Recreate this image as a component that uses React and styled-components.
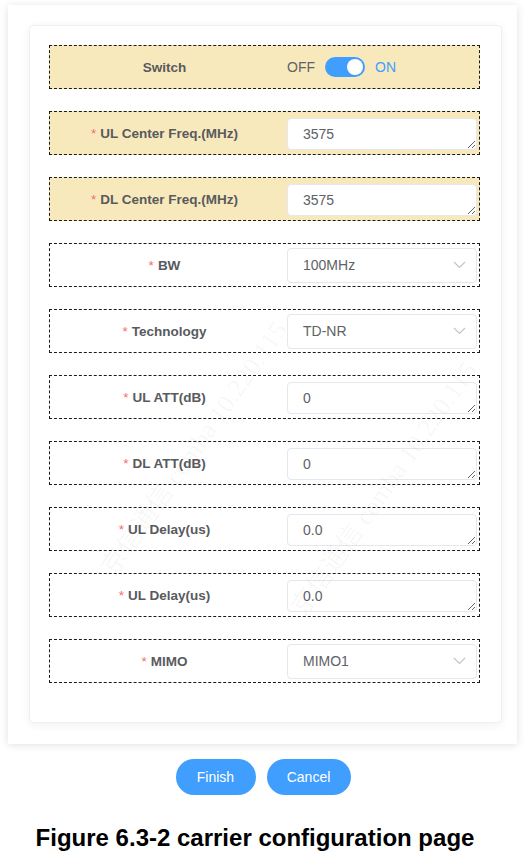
import React from "react";
import styled, { createGlobalStyle } from "styled-components";

const Global = createGlobalStyle`
  html, body { margin: 0; padding: 0; background: #ffffff; }
  body { font-family: "Liberation Sans", Arial, sans-serif; }
  * { box-sizing: border-box; }
`;

const Page = styled.div`
  position: relative;
  width: 526px;
  height: 858px;
  overflow: hidden;
  padding-top: 5px;
`;

const OuterPanel = styled.div`
  margin-left: 8px;
  width: 509px;
  padding: 20px 15px 21px 21px;
  background: #ffffff;
  box-shadow: 0 1px 8px rgba(0, 0, 0, 0.12);
`;

const Card = styled.div`
  display: flex;
  flex-direction: column;
  gap: 22px;
  padding: 19px 21px 39px 19px;
  background: #ffffff;
  border: 1px solid #eef0f3;
  border-radius: 4px;
  box-shadow: 0 2px 10px rgba(0, 0, 0, 0.06);
`;

const Row = styled.div`
  display: grid;
  grid-template-columns: 229px 190px;
  column-gap: 8px;
  align-items: center;
  height: 44px;
  border: 1px dashed #1a1a1a;
  background: ${(p) => (p.$highlight ? "#f8e9bd" : "transparent")};
`;

const Label = styled.div`
  text-align: center;
  font-family: "Liberation Sans", Arial, sans-serif;
  font-weight: bold;
  font-size: 13.5px;
  color: #585a5e;
`;

const Star = styled.span`
  color: #f56c6c;
  font-weight: normal;
  margin-right: 4px;
`;

const TextArea = styled.textarea`
  display: block;
  width: 190px;
  height: 32px;
  margin-top: 2px;
  padding: 5px 15px;
  font-family: "Liberation Sans", Arial, sans-serif;
  font-size: 14px;
  line-height: 20px;
  color: #606266;
  background: #ffffff;
  border: 1px solid #e4e7ed;
  border-radius: 4px;
  resize: vertical;
  outline: none;
  overflow: hidden;
`;

const Select = styled.div`
  position: relative;
  display: flex;
  align-items: center;
  width: 190px;
  height: 35px;
  padding: 0 30px 0 15px;
  font-family: "Liberation Sans", Arial, sans-serif;
  font-size: 14px;
  color: #606266;
  background: #ffffff;
  border: 1px solid #e4e7ed;
  border-radius: 4px;
`;

const Arrow = styled.svg`
  position: absolute;
  right: 10px;
  top: 50%;
  margin-top: -4px;
`;

const SwitchWrap = styled.div`
  display: flex;
  align-items: center;
  gap: 10px;
  font-family: "Liberation Sans", Arial, sans-serif;
  font-size: 14px;
`;

const SwitchText = styled.span`
  color: ${(p) => (p.$active ? "#409eff" : "#606266")};
`;

const Toggle = styled.span`
  position: relative;
  display: inline-block;
  width: 40px;
  height: 20px;
  border-radius: 10px;
  background: #409eff;
  &::after {
    content: "";
    position: absolute;
    top: 2px;
    right: 2px;
    width: 16px;
    height: 16px;
    border-radius: 50%;
    background: #ffffff;
  }
`;

const Buttons = styled.div`
  display: flex;
  justify-content: center;
  gap: 11px;
  margin-top: 15px;
`;

const Button = styled.button`
  height: 36px;
  width: ${(p) => p.$w}px;
  border: none;
  border-radius: 18px;
  background: #409eff;
  color: #ffffff;
  font-family: "Liberation Sans", Arial, sans-serif;
  font-size: 14px;
  cursor: pointer;
`;

const Caption = styled.div`
  margin-top: 29px;
  padding-right: 16px;
  text-align: center;
  font-family: "Liberation Sans", Arial, sans-serif;
  font-weight: bold;
  font-size: 24px;
  line-height: 28px;
  color: #000000;
`;

const Watermark = styled.div`
  position: absolute;
  left: ${(p) => p.$x}px;
  top: ${(p) => p.$y}px;
  transform: rotate(-55deg);
  transform-origin: left top;
  white-space: nowrap;
  font-family: "Liberation Serif", "Noto Sans CJK SC", serif;
  font-size: 26px;
  color: rgba(0, 0, 0, 0.045);
  pointer-events: none;
`;

const rows = [
  { label: "UL Center Freq.(MHz)", value: "3575", kind: "text", hl: true },
  { label: "DL Center Freq.(MHz)", value: "3575", kind: "text", hl: true },
  { label: "BW", value: "100MHz", kind: "select" },
  { label: "Technology", value: "TD-NR", kind: "select" },
  { label: "UL ATT(dB)", value: "0", kind: "text" },
  { label: "DL ATT(dB)", value: "0", kind: "text" },
  { label: "UL Delay(us)", value: "0.0", kind: "text" },
  { label: "UL Delay(us)", value: "0.0", kind: "text" },
  { label: "MIMO", value: "MIMO1", kind: "select" },
];

const Chevron = () => (
  <Arrow width="13" height="8" viewBox="0 0 13 8">
    <path d="M1 1 L6.5 6.5 L12 1" fill="none" stroke="#c0c4cc" strokeWidth="1.2" />
  </Arrow>
);

export default function App() {
  return (
    <Page>
      <Global />
      <OuterPanel>
        <Card>
          <Row $highlight>
            <Label>Switch</Label>
            <SwitchWrap>
              <SwitchText>OFF</SwitchText>
              <Toggle />
              <SwitchText $active>ON</SwitchText>
            </SwitchWrap>
          </Row>
          {rows.map((r, i) => (
            <Row key={i} $highlight={r.hl}>
              <Label>
                <Star>*</Star>
                {r.label}
              </Label>
              {r.kind === "text" ? (
                <TextArea defaultValue={r.value} />
              ) : (
                <Select>
                  {r.value}
                  <Chevron />
                </Select>
              )}
            </Row>
          ))}
        </Card>
      </OuterPanel>
      <Buttons>
        <Button $w={80}>Finish</Button>
        <Button $w={84}>Cancel</Button>
      </Buttons>
      <Caption>Figure 6.3-2 carrier configuration page</Caption>
      <Watermark $x={90} $y={560}>京信通信 comba 10.220.115</Watermark>
      <Watermark $x={280} $y={600}>京信通信 comba 10.220.115</Watermark>
    </Page>
  );
}
